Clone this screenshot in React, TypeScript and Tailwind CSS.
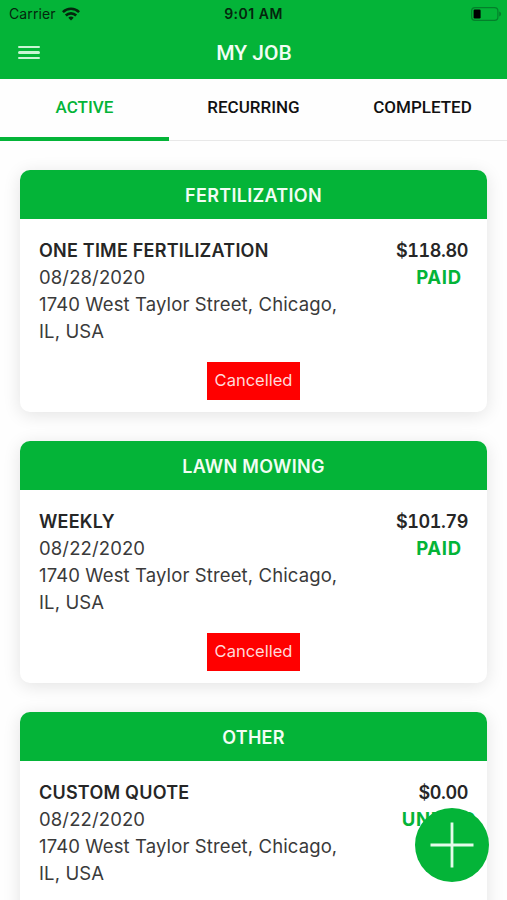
import clsx from 'clsx';

type Job = {
  id: number;
  category: string;
  title: string;
  date: string;
  address: string;
  price: string;
  status: string;
  cancelled: boolean;
};

const tabs = ['ACTIVE', 'RECURRING', 'COMPLETED'];

const jobs: Job[] = [
  {
    id: 1,
    category: 'FERTILIZATION',
    title: 'ONE TIME FERTILIZATION',
    date: '08/28/2020',
    address: '1740 West Taylor Street, Chicago, IL, USA',
    price: '$118.80',
    status: 'PAID',
    cancelled: true,
  },
  {
    id: 2,
    category: 'LAWN MOWING',
    title: 'WEEKLY',
    date: '08/22/2020',
    address: '1740 West Taylor Street, Chicago, IL, USA',
    price: '$101.79',
    status: 'PAID',
    cancelled: true,
  },
  {
    id: 3,
    category: 'OTHER',
    title: 'CUSTOM QUOTE',
    date: '08/22/2020',
    address: '1740 West Taylor Street, Chicago, IL, USA',
    price: '$0.00',
    status: 'UNPAID',
    cancelled: false,
  },
];

function WifiIcon() {
  return (
    <svg width="18" height="14" viewBox="0 0 18 14" fill="none" stroke="#04260d" strokeWidth="2.6">
      <path d="M0.9 5.1a11.6 11.6 0 0 1 16.2 0" />
      <path d="M3.8 8.5a7.4 7.4 0 0 1 10.4 0" />
      <path d="M9 13.6l-2.7-2.9a3.9 3.9 0 0 1 5.4 0z" fill="#04260d" stroke="none" />
    </svg>
  );
}

function BatteryIcon() {
  return (
    <svg width="31" height="14" viewBox="0 0 31 14" fill="none">
      <rect x="0.6" y="0.6" width="26.3" height="12.8" rx="3.4" stroke="#04802b" strokeWidth="1.2" />
      <rect x="2.6" y="2.6" width="7" height="8.8" rx="1.2" fill="#000" />
      <path d="M28.2 4.6c1.3.5 1.9 1.4 1.9 2.4s-.6 1.9-1.9 2.4z" fill="#04802b" />
    </svg>
  );
}

// 状态栏
function StatusBar() {
  return (
    <div className="grid h-[27px] grid-cols-3 items-center px-[7px] font-['Inter',sans-serif] text-[14px] text-[#04260d]">
      <div className="flex items-center gap-[6px] pl-[2px]">
        <span className="tracking-[0.1px]">Carrier</span>
        <WifiIcon />
      </div>
      <span className="text-center font-semibold tracking-[0.5px]">9:01 AM</span>
      <div className="-mr-[2px] flex justify-end">
        <BatteryIcon />
      </div>
    </div>
  );
}

// 顶部导航
function Header() {
  return (
    <header className="grid h-[52px] grid-cols-3 items-center px-[18px]">
      <button className="flex w-[22px] flex-col gap-[3px] pb-px" aria-label="Menu">
        <span className="h-[2.5px] rounded-full bg-[#c9f5d4]" />
        <span className="h-[2.5px] rounded-full bg-[#c9f5d4]" />
        <span className="h-[2.5px] rounded-full bg-[#c9f5d4]" />
      </button>
      <h1 className="pt-px pl-px text-center font-['Roboto',sans-serif] text-[21px] font-medium text-[#f2fdf4]">
        MY JOB
      </h1>
    </header>
  );
}

function Tabs() {
  return (
    <nav className="grid h-[62px] grid-cols-3 font-['Roboto',sans-serif] text-[17px] font-medium">
      {tabs.map((tab, i) => (
        <button
          key={tab}
          className={clsx(
            'flex items-center justify-center pt-[1px]',
            i === 0 ? 'border-b-4 border-[#04b438] pb-[2px] text-[#04b438]' : 'border-b border-[#e8e8e8] pb-[5px] text-[#111]'
          )}
        >
          {tab}
        </button>
      ))}
    </nav>
  );
}

function JobCard({ job }: { job: Job }) {
  return (
    <article className="h-[242px] shrink-0 overflow-hidden rounded-[10px] bg-white shadow-[0_3px_18px_rgba(0,0,0,0.11)]">
      <h2 className="flex h-[49px] items-center justify-center bg-[#04b438] pt-[2px] text-[18px] font-semibold tracking-[0.3px] text-[#f2fdf4]">
        {job.category}
      </h2>
      <div className="flex justify-between px-[19px] pt-[18px] text-[18.5px] leading-[27px] tracking-[0.12px] text-[#3a3a3a]">
        <div className="w-[310px]">
          <h3 className="text-[18px] font-semibold tracking-[0.22px] text-[#262626]">{job.title}</h3>
          <p>{job.date}</p>
          <p>{job.address}</p>
        </div>
        <div className="flex w-[86px] flex-col items-end font-semibold">
          <span className="text-[18px] tracking-[-0.4px] text-[#262626] tabular-nums">{job.price}</span>
          <span className="-mr-[10px] w-[78px] text-center text-[18.5px] font-bold tracking-[0.7px] text-[#04b438]">
            {job.status}
          </span>
        </div>
      </div>
      {job.cancelled && (
        <div className="mt-[17px] flex justify-center">
          <button className="h-[38px] w-[93px] bg-[#ff0000] pb-[2px] text-[16.5px] text-[#ffdada]">Cancelled</button>
        </div>
      )}
    </article>
  );
}

function AddButton() {
  return (
    <button
      className="absolute bottom-[18px] right-[18px] flex size-[74px] items-center justify-center rounded-full bg-[#04b438]"
      aria-label="Add"
    >
      <svg width="44" height="46" viewBox="0 0 44 46" stroke="#e4fbea" strokeWidth="2.8">
        <path d="M22 0.5v45M0.5 23h43" />
      </svg>
    </button>
  );
}

export default function App() {
  return (
    <div className="relative h-[900px] w-[507px] overflow-hidden bg-[#fefefe] font-['Inter',sans-serif]">
      <div className="bg-[#04b438]">
        <StatusBar />
        <Header />
      </div>
      <Tabs />
      <main className="flex flex-col gap-[29.2px] px-5 pt-[29px]">
        {jobs.map((job) => (
          <JobCard key={job.id} job={job} />
        ))}
      </main>
      <AddButton />
    </div>
  );
}
